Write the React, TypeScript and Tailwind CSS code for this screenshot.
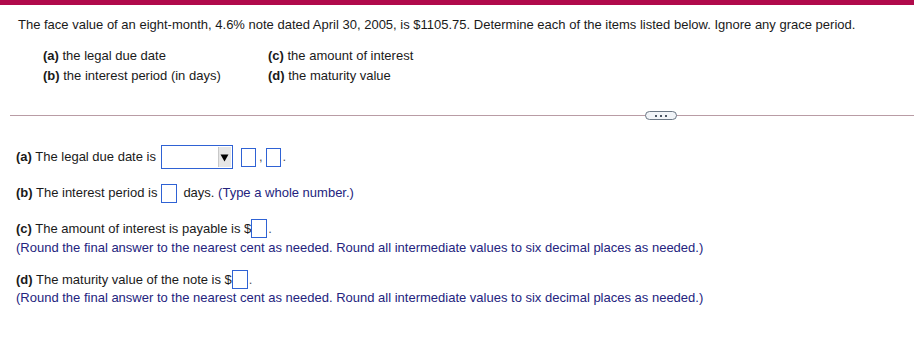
import React from 'react';

const Box: React.FC<{ w?: string }> = ({ w = 'w-[16px]' }) => (
  <span className={`inline-block ${w} h-[19px] border border-[#2f62d4] bg-white align-middle`} />
);

const Hint: React.FC<{ children: React.ReactNode }> = ({ children }) => (
  <span className="text-[#24247e]">{children}</span>
);

export default function App() {
  return (
    <div className="w-[914px] h-[360px] bg-white text-[13px] text-[#1a1a1a] overflow-hidden" style={{ fontFamily: '"Liberation Sans", Arial, sans-serif' }}>
      <div className="h-[5px] bg-[#b00a4b]" />

      <p className="pl-[18px] pt-[12px] leading-[16px]">
        The face value of an eight-month, 4.6% note dated April 30, 2005, is $1105.75. Determine each of the items listed below. Ignore any grace period.
      </p>

      <div className="grid grid-cols-[225px_auto] pl-[43px] pt-[15px] gap-y-[4px] leading-[16px]">
        <div><b>(a)</b> the legal due date</div>
        <div><b>(c)</b> the amount of interest</div>
        <div><b>(b)</b> the interest period (in days)</div>
        <div><b>(d)</b> the maturity value</div>
      </div>

      <div className="relative mt-[31px] ml-[10px] h-[1px] bg-[#b99ca5]">
        <div className="absolute left-[635px] top-[-4px] w-[32px] h-[9px] rounded-full border border-[#6b7785] bg-[#f1f4f8] flex items-center justify-center gap-[3px]">
          <span className="w-[2px] h-[2px] bg-[#4b5563]" />
          <span className="w-[2px] h-[2px] bg-[#4b5563]" />
          <span className="w-[2px] h-[2px] bg-[#4b5563]" />
        </div>
      </div>

      <div className="pl-[16px] pt-[29px]">
        <div className="flex items-center h-[24px]">
          <span><b>(a)</b> The legal due date is</span>
          <span className="ml-[5px] flex items-stretch w-[72px] h-[24px] border border-[#2f62d4] bg-white p-[1px]">
            <span className="flex-1" />
            <span className="w-[13px] bg-[#e6e6e6] border-l border-[#c8c8c8] flex items-center justify-center">
              <svg width="9" height="9" viewBox="0 0 9 9"><path d="M0.5 1.5 H8.5 L4.5 8.5 Z" fill="#000" /></svg>
            </span>
          </span>
          <span className="ml-[8px]"><Box w="w-[15px]" /></span>
          <span className="mx-[3px] text-[#555]">,</span>
          <Box w="w-[15px]" />
          <span className="ml-[2px] text-[#555]">.</span>
        </div>

        <div className="flex items-center h-[19px] mt-[14px]">
          <span><b>(b)</b> The interest period is</span>
          <span className="ml-[4px]"><Box /></span>
          <span className="ml-[6px]">days. <Hint>(Type a whole number.)</Hint></span>
        </div>

        <div className="mt-[17px] leading-[19px]">
          <div className="flex items-center h-[19px]">
            <span><b>(c)</b> The amount of interest is payable is $</span>
            <Box />
            <span className="ml-[1px] text-[#555]">.</span>
          </div>
          <div><Hint>(Round the final answer to the nearest cent as needed. Round all intermediate values to six decimal places as needed.)</Hint></div>
        </div>

        <div className="mt-[13px] leading-[18px]">
          <div className="flex items-center h-[19px]">
            <span><b>(d)</b> The maturity value of the note is $</span>
            <Box />
            <span className="ml-[1px] text-[#555]">.</span>
          </div>
          <div><Hint>(Round the final answer to the nearest cent as needed. Round all intermediate values to six decimal places as needed.)</Hint></div>
        </div>
      </div>
    </div>
  );
}
